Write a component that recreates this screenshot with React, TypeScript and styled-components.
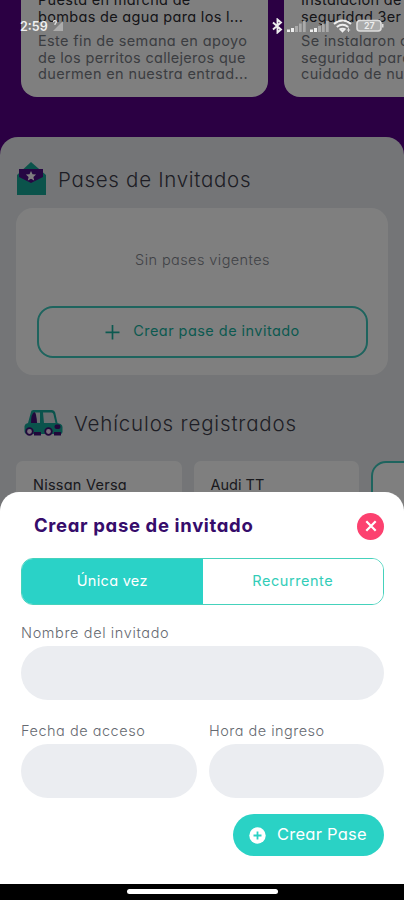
import React from "react";
import styled, { createGlobalStyle, css } from "styled-components";

const Global = createGlobalStyle`
  * { box-sizing: border-box; }
  body { margin: 0; background: #000; font-family: Inter, "Open Sans", sans-serif; font-feature-settings: "cv11" 1; }
  button { font: inherit; font-feature-settings: inherit; border: 0; padding: 0; }
  h1, h2, p { margin: 0; font-weight: 400; }
`;

const type = css<{ $size: number; $track?: number }>`
  font-size: ${(p) => p.$size}px;
  letter-spacing: ${(p) => p.$track ?? 0}px;
  white-space: nowrap;
`;

const Phone = styled.main`
  position: relative;
  width: 404px;
  height: 900px;
  overflow: hidden;
  background: #560086;
`;

const NewsRow = styled.div`
  display: flex;
  gap: 16px;
  height: 137px;
  padding: 0 0 40px 21px;
`;
const NewsCard = styled.article`
  flex: 0 0 247px;
  height: 97px;
  padding-left: 17px;
  background: #fff;
  border-radius: 0 0 16px 16px;
  overflow: hidden;
`;
const NewsTitle = styled.div`
  margin-top: -9px;
  height: 42px;
  line-height: 17px;
  color: #2c2c32;
`;
const NewsBody = styled.div`
  line-height: 16.5px;
  color: #777b83;
`;
const Line = styled.p<{ $size: number; $track?: number }>`${type}`;

const Panel = styled.section`
  height: 763px;
  padding: 20px 16px 0;
  background: #e8ebef;
  border-radius: 18px 18px 0 0;
`;
const SectionHead = styled.header<{ $gap: number; $indent?: number }>`
  display: flex;
  align-items: center;
  gap: ${(p) => p.$gap}px;
  height: 44px;
  padding-left: ${(p) => p.$indent ?? 0}px;
`;
const SectionTitle = styled.h2<{ $size: number; $track?: number }>`
  ${type}
  font-weight: 350;
  color: #3d3d4a;
`;
const PassCard = styled.div`
  display: flex;
  flex-direction: column;
  align-items: center;
  height: 167px;
  margin: 7px 0 26px;
  padding: 42px 20px 0 21px;
  background: #fff;
  border-radius: 17px;
`;
const EmptyText = styled.p<{ $size: number; $track?: number }>`
  ${type}
  height: 56px;
  line-height: 20px;
  font-weight: 350;
  color: #82858d;
`;
const OutlineButton = styled.button`
  display: flex;
  align-items: center;
  justify-content: center;
  gap: 13px;
  width: 100%;
  height: 52px;
  border: 2px solid #3cc8bc;
  border-radius: 16px;
  background: transparent;
  color: #18b3a1;
`;
const ButtonText = styled.span<{ $size: number; $track?: number }>`
  ${type}
  padding-bottom: 3px;
`;

const Vehicles = styled.div`
  display: flex;
  gap: 12px;
  margin-top: 16px;
`;
const Vehicle = styled.div<{ $outlined?: boolean }>`
  flex: 0 0 165.5px;
  height: 90px;
  padding: 14px 17px;
  line-height: 20px;
  color: #34343c;
  background: #fff;
  border: ${(p) => (p.$outlined ? "2px solid #3cc8bc" : "0")};
  border-radius: ${(p) => (p.$outlined ? 15 : 7)}px;
`;

const Scrim = styled.div`
  position: absolute;
  inset: 0;
  background: rgba(0, 0, 0, 0.5);
`;
const StatusBar = styled.div`
  position: absolute;
  top: 16px;
  left: 20px;
  right: 20px;
  height: 20px;
  display: flex;
  align-items: center;
  justify-content: space-between;
  color: #f0f0f0;
`;
const StatusGroup = styled.div<{ $gap: number }>`
  display: flex;
  align-items: center;
  gap: ${(p) => p.$gap}px;
`;
const Clock = styled.span<{ $size: number; $track?: number }>`
  ${type}
  font-weight: 600;
`;

const Sheet = styled.section`
  position: absolute;
  left: 0;
  right: 0;
  bottom: 16px;
  height: 392px;
  padding: 20px 20px 0 21px;
  background: #fff;
  border-radius: 19px 19px 0 0;
`;
const SheetHead = styled.header`
  display: flex;
  align-items: center;
  justify-content: space-between;
  height: 28px;
  padding-left: 13px;
`;
const SheetTitle = styled.h1<{ $size: number; $track?: number }>`
  ${type}
  padding-bottom: 2px;
  font-weight: 650;
  color: #360c6b;
`;
const CloseButton = styled.button`
  display: grid;
  place-items: center;
  width: 27px;
  height: 27px;
  border-radius: 50%;
  background: #fc416f;
`;
const Segments = styled.div`
  display: flex;
  height: 47px;
  margin-top: 18px;
  border: 1px solid #45d2bc;
  border-radius: 12px;
  overflow: hidden;
`;
const Segment = styled.button<{ $active?: boolean }>`
  flex: 1;
  padding-bottom: 3px;
  background: ${(p) => (p.$active ? "#2ad2c7" : "#fff")};
  color: ${(p) => (p.$active ? "#fff" : "#33cdb8")};
`;
const Fields = styled.div`
  display: grid;
  grid-template-columns: 176px 175px;
  column-gap: 12px;
  row-gap: 20px;
  margin-top: 17px;
`;
const Field = styled.label<{ $wide?: boolean }>`
  grid-column: ${(p) => (p.$wide ? "1 / -1" : "auto")};
  display: block;
`;
const FieldLabel = styled.span<{ $size: number; $track?: number }>`
  ${type}
  display: block;
  height: 24px;
  line-height: 21px;
  font-weight: 350;
  color: #666a71;
`;
const FieldInput = styled.input`
  display: block;
  width: 100%;
  height: 54px;
  padding: 0 20px;
  border: 0;
  border-radius: 27px;
  background: #ebedf1;
`;
const SubmitButton = styled.button`
  display: flex;
  align-items: center;
  gap: 11px;
  width: 151px;
  height: 42px;
  margin: 16px 0 0 auto;
  padding-left: 16px;
  border-radius: 21px;
  background: #2ad2c5;
  color: #fff;
`;
const NavBar = styled.footer`
  position: absolute;
  left: 0;
  right: 0;
  bottom: 0;
  height: 16px;
  padding-top: 5px;
  background: #000;
`;
const NavHandle = styled.div`
  width: 151px;
  height: 5px;
  margin-left: 127px;
  border-radius: 3px;
  background: #fff;
`;

const EnvelopeIcon = () => (
  <svg width="30" height="34" viewBox="0 0 30 34">
    <path d="M15 0 30 13V33H1V13Z" fill="#16a797" />
    <path d="M3 7H27V15L15 21 3 15Z" fill="#4c0f87" />
    <path d="m15 9 1.5 3.2 3.6.4-2.7 2.4.8 3.6-3.2-1.9-3.2 1.9.8-3.6L9.9 12.6l3.6-.4Z" fill="#fff" />
  </svg>
);

const CarIcon = () => (
  <svg width="40" height="28" viewBox="0 0 40 28">
    <path d="M8 3Q8 1 10.500 1H29Q31.500 1 32.200 3.500L34.500 14 37.500 15Q39.500 16 39.500 18V23Q39.500 25 37.500 25H4Q1.500 25 1.500 22V17Q2 14.500 5 14Z" fill="#14a798" />
    <path d="M8.500 13.500 11 3.500H17V14Z" fill="#d6dfe3" />
    <path d="M8 14Q8 4.500 11.500 3Q13.500 4 14 14Z" fill="#420f77" />
    <path d="M20 3.500H28.500Q30 3.700 30.500 5.500L32.500 14H21Z" fill="#d6dfe3" />
    <rect x="31.500" y="15.500" width="6" height="4.500" rx="2" fill="#420f77" />
    <path d="M11 23h7v3.500h-7zM31 23h7v3.500h-7z" fill="#420f77" />
    <circle cx="6.500" cy="22.500" r="3.300" fill="#f0daf5" stroke="#420f77" strokeWidth="1.800" />
    <circle cx="25.500" cy="22.500" r="3.300" fill="#f0daf5" stroke="#420f77" strokeWidth="1.800" />
  </svg>
);

const PlusIcon = () => (
  <svg width="15" height="16" viewBox="0 0 15 16">
    <path d="M7.500 1V15.500M.500 8.300H14.500" stroke="#18b3a1" strokeWidth="1.700" />
  </svg>
);

const CloseIcon = () => (
  <svg width="12" height="12" viewBox="0 0 12 12">
    <path d="m1.300 1.300 9.400 9.400m0-9.400-9.400 9.400" stroke="#fff" strokeWidth="2.200" />
  </svg>
);

const CirclePlusIcon = () => (
  <svg width="17" height="17" viewBox="0 0 17 17">
    <circle cx="8.500" cy="8.500" r="8.200" fill="#fff" />
    <path d="M8.500 4.500v8m-4-4h8" stroke="#2ad2c5" strokeWidth="1.800" />
  </svg>
);

const NoSignalIcon = () => (
  <svg width="11" height="12" viewBox="0 0 11 12">
    <path d="M0 2Q2-1 3.500 2L2 4v1" fill="none" stroke="#ddd" strokeWidth="1.300" />
    <path d="M0 11 10 1v10Z" fill="#bbb" opacity=".75" />
  </svg>
);

const BluetoothIcon = () => (
  <svg width="11" height="16" viewBox="0 0 11 16">
    <path d="m1 4.500 8 7-3.500 3V1.500l3.500 3-8 7" fill="none" stroke="#eee" strokeWidth="1.900" />
  </svg>
);

const SignalIcon = () => (
  <svg width="19" height="13" viewBox="0 0 19 13">
    <path d="M0 9.500h3V12H0zM4 8h3v4H4z" fill="#eee" />
    <path d="M8 6h3v6H8zM12 3.500h2.700V12H12zM16 1h2.700v11H16z" fill="#aaa" />
  </svg>
);

const WifiIcon = () => (
  <svg width="19" height="14" viewBox="0 0 19 14">
    <path d="M1 5q8.500-7 17 0M3.800 8q5.700-4.500 11.400 0M6.500 10.700q3-2 6 0" fill="none" stroke="#eee" strokeWidth="2" />
    <path d="m7 11 2.500 2.800L12 11Z" fill="#eee" />
    <path d="M15.500 8.500v4.500M13.800 11h3.400" stroke="#ddd" strokeWidth="1" />
  </svg>
);

const BatteryIcon = () => (
  <svg width="28" height="14" viewBox="0 0 28 14">
    <rect x="1" y="1.500" width="24" height="10.500" rx="3" fill="#aaa" stroke="#ddd" strokeWidth="1.600" />
    <path d="M26 5h1.500v3.500H26z" fill="#ddd" />
    <text x="8" y="10" fontSize="9" fontWeight="600" fill="#eee">27</text>
  </svg>
);

export default function App() {
  return (
    <Phone>
      <Global />
      <NewsRow>
        <NewsCard>
          <NewsTitle>
            <Line $size={14.5} $track={0.32}>Puesta en marcha de</Line>
            <Line $size={14.5} $track={0.32}>bombas de agua para los l...</Line>
          </NewsTitle>
          <NewsBody>
            <Line $size={14.5} $track={0.36}>Este fin de semana en apoyo</Line>
            <Line $size={14.5} $track={0.3}>de los perritos callejeros que</Line>
            <Line $size={14.5} $track={0.36}>duermen en nuestra entrad...</Line>
          </NewsBody>
        </NewsCard>
        <NewsCard>
          <NewsTitle>
            <Line $size={14.5} $track={0.3}>Instalación de</Line>
            <Line $size={14.5} $track={0.3}>seguridad 3er</Line>
          </NewsTitle>
          <NewsBody>
            <Line $size={14.5} $track={0.36}>Se instalaron cámaras</Line>
            <Line $size={14.5} $track={0.36}>seguridad para el</Line>
            <Line $size={14.5} $track={0.36}>cuidado de nuestra</Line>
          </NewsBody>
        </NewsCard>
      </NewsRow>

      <Panel>
        <SectionHead $gap={12}>
          <EnvelopeIcon />
          <SectionTitle $size={20.5} $track={0.7}>Pases de Invitados</SectionTitle>
        </SectionHead>
        <PassCard>
          <EmptyText $size={14.5} $track={0.42}>Sin pases vigentes</EmptyText>
          <OutlineButton>
            <PlusIcon />
            <ButtonText $size={14.5} $track={0.45}>Crear pase de invitado</ButtonText>
          </OutlineButton>
        </PassCard>
        <SectionHead $gap={11} $indent={7}>
          <CarIcon />
          <SectionTitle $size={20.5} $track={0.83}>Vehículos registrados</SectionTitle>
        </SectionHead>
        <Vehicles>
          <Vehicle><Line $size={14.5} $track={0.25}>Nissan Versa</Line></Vehicle>
          <Vehicle><Line $size={14.5}>Audi TT</Line></Vehicle>
          <Vehicle $outlined />
        </Vehicles>
      </Panel>

      <Scrim />
      <StatusBar>
        <StatusGroup $gap={5}>
          <Clock $size={12.5}>2:59</Clock>
          <NoSignalIcon />
        </StatusGroup>
        <StatusGroup $gap={4}>
          <BluetoothIcon />
          <SignalIcon />
          <SignalIcon />
          <WifiIcon />
          <BatteryIcon />
        </StatusGroup>
      </StatusBar>

      <Sheet>
        <SheetHead>
          <SheetTitle $size={18.5} $track={0.65}>Crear pase de invitado</SheetTitle>
          <CloseButton aria-label="Cerrar"><CloseIcon /></CloseButton>
        </SheetHead>
        <Segments>
          <Segment $active><ButtonText $size={14.5} $track={0.3}>Única vez</ButtonText></Segment>
          <Segment><ButtonText $size={14.5} $track={0.55}>Recurrente</ButtonText></Segment>
        </Segments>
        <Fields>
          <Field $wide>
            <FieldLabel $size={14.5} $track={0.62}>Nombre del invitado</FieldLabel>
            <FieldInput />
          </Field>
          <Field>
            <FieldLabel $size={14.5} $track={0.52}>Fecha de acceso</FieldLabel>
            <FieldInput />
          </Field>
          <Field>
            <FieldLabel $size={14.5} $track={0.48}>Hora de ingreso</FieldLabel>
            <FieldInput />
          </Field>
        </Fields>
        <SubmitButton>
          <CirclePlusIcon />
          <ButtonText $size={16.5} $track={0.25}>Crear Pase</ButtonText>
        </SubmitButton>
      </Sheet>
      <NavBar><NavHandle /></NavBar>
    </Phone>
  );
}
